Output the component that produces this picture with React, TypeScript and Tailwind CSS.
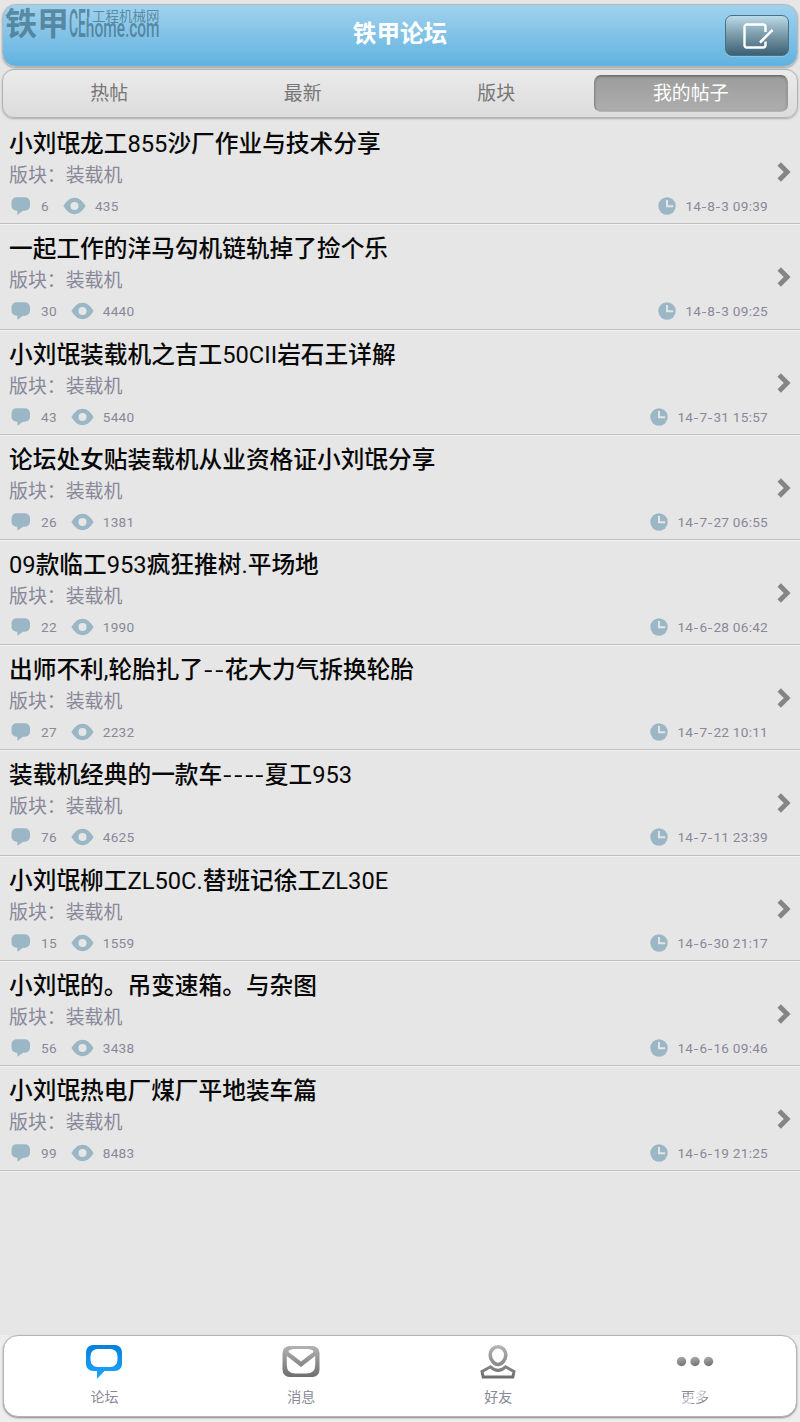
import React from "react";

const font = "font-[Roboto,'Noto_Sans_CJK_SC',sans-serif]";

const posts: [string, number, number, string][] = [
  ["小刘氓龙工855沙厂作业与技术分享", 6, 435, "14-8-3 09:39"],
  ["一起工作的洋马勾机链轨掉了捡个乐", 30, 4440, "14-8-3 09:25"],
  ["小刘氓装载机之吉工50CII岩石王详解", 43, 5440, "14-7-31 15:57"],
  ["论坛处女贴装载机从业资格证小刘氓分享", 26, 1381, "14-7-27 06:55"],
  ["09款临工953疯狂推树.平场地", 22, 1990, "14-6-28 06:42"],
  ["出师不利,轮胎扎了--花大力气拆换轮胎", 27, 2232, "14-7-22 10:11"],
  ["装载机经典的一款车----夏工953", 76, 4625, "14-7-11 23:39"],
  ["小刘氓柳工ZL50C.替班记徐工ZL30E", 15, 1559, "14-6-30 21:17"],
  ["小刘氓的。吊变速箱。与杂图", 56, 3438, "14-6-16 09:46"],
  ["小刘氓热电厂煤厂平地装车篇", 99, 8483, "14-6-19 21:25"],
];

/** Sets Latin runs in the regular weight and gives every hyphen a wide cell. */
function Mixed({ text }: { text: string }) {
  return (
    <>
      {text.split(/(-|[\w.,: ]+)/).map((part, i) => {
        if (part === "-") {
          return (
            <span key={i} className="inline-block w-[0.45em] scale-x-125 text-center font-normal tracking-normal">
              -
            </span>
          );
        }
        return i % 2 ? (
          <span key={i} className="font-normal">
            {part}
          </span>
        ) : (
          part
        );
      })}
    </>
  );
}

function CommentIcon() {
  return (
    <svg width="20" height="18" viewBox="0 0 20 18" fill="#9bb7c6">
      <path d="M5.500 .2h8.500a5 5 0 0 1 5 5v3.600a5 5 0 0 1-5 5H12L6.500 17.700 6.300 13.800H5.500A5 5 0 0 1 .5 8.800V5.200A5 5 0 0 1 5.500 .2Z" />
    </svg>
  );
}

function EyeIcon() {
  return (
    <svg width="23" height="18" viewBox="0 0 23 18" fill="#9bb7c6">
      <path
        fillRule="evenodd"
        d="M.4 9C3.500 4 7 .8 11.500 .8S19.500 4 22.600 9C19.500 14 16 17.200 11.500 17.200S3.500 14 .4 9Zm11.100-4a4 4 0 1 0 0 8 4 4 0 0 0 0-8Z"
      />
    </svg>
  );
}

function ClockIcon() {
  return (
    <svg width="18" height="18" viewBox="0 0 18 18">
      <circle cx="9" cy="9" r="8.700" fill="#9bb7c6" />
      <path d="M9 3v6.300h6.200" fill="none" stroke="#e6e6e6" strokeWidth="1.900" />
    </svg>
  );
}

function Row({ post }: { post: [string, number, number, string] }) {
  const [title, replies, views, date] = post;
  return (
    <li className="flex h-[105.180px] items-stretch border-b border-[#bfbfbf] pr-[9px] pl-[9px] shadow-[0_1px_0_#f2f2f2]">
      <div className="flex min-w-0 grow flex-col pt-[8px]">
        <h2 className="h-[33px] text-[23.700px] leading-[34px] font-medium whitespace-nowrap text-[#080808]">
          <Mixed text={title} />
        </h2>
        <p className="h-8 text-[18.900px] leading-8 whitespace-nowrap text-[#888899]">版块：装载机</p>
        <div className="-mt-[1px] flex h-[30px] items-center pl-[2px] text-[13.600px] leading-[30px] tracking-[0.260px] text-[#888899]">
          <CommentIcon />
          <span className="ml-[10px]">{replies}</span>
          <span className="ml-[14px]">
            <EyeIcon />
          </span>
          <span className="ml-[9px]">{views}</span>
          <span className="mr-[9px] ml-auto">
            <ClockIcon />
          </span>
          <span className="whitespace-pre">
            <Mixed text={date} />
          </span>
        </div>
      </div>
      <div className="flex w-[23px] shrink-0 justify-end pt-[43px]">
        <svg width="14" height="20" viewBox="0 0 14 20" fill="none" stroke="#858585" strokeWidth="4.800">
          <path d="m2.200 2 8 8-8 8" />
        </svg>
      </div>
    </li>
  );
}

function Watermark() {
  return (
    <svg className="absolute top-0 left-0 overflow-visible" width="170" height="50" fill="#426f86" fillOpacity=".72">
      <text x="5" y="34.500" fontSize="32" fontWeight="700" fontFamily="Noto Sans CJK SC, sans-serif" textLength="64" lengthAdjust="spacingAndGlyphs">
        铁甲
      </text>
      <g fontFamily="Roboto, sans-serif" fontWeight="500">
        <text transform="translate(69 36.500) scale(.56 1.350)" fontSize="29" textLength="30" lengthAdjust="spacingAndGlyphs">
          CE
        </text>
        <text transform="translate(85.800 36.500) scale(.6 1)" fontSize="26" textLength="123" lengthAdjust="spacingAndGlyphs">
          home.com
        </text>
      </g>
      <rect x="87" y="9" width="2.400" height="8.500" />
      <text x="92" y="20.500" fontSize="13.500" fontFamily="Noto Sans CJK SC, sans-serif">
        工程机械网
      </text>
    </svg>
  );
}

function Header() {
  return (
    <header className="relative mx-[2px] mt-[4px] flex h-[63px] items-center justify-end rounded-[14px] border border-[#b4b8ba] bg-linear-to-b from-[#a0d2ed] to-[#60b2e0] pr-[8px] shadow-[0_1px_2px_#999]">
      <h1 className="absolute inset-x-0 top-[12px] text-center text-[23.600px] leading-[34px] font-bold text-white">铁甲论坛</h1>
      <button className="flex h-[41px] w-[64px] items-center justify-center rounded-[7px] border border-[#477184] bg-linear-to-b from-[#bddbe9] via-[#7999a8] to-[#3c6074] shadow-[0_1px_0_#8ac5e4]">
        <svg width="32" height="28" viewBox="0 0 32 28" fill="none" stroke="white" strokeWidth="2.400">
          <path d="M24.500 10V5a2.500 2.500 0 0 0-2.500-2.500H6A2.500 2.500 0 0 0 3.500 5v18A2.500 2.500 0 0 0 6 25.500h16a2.500 2.500 0 0 0 2.500-2.500v-3.500" />
          <path d="m31.500 8-11 11-1.500 1.500" strokeWidth="2.500" />
        </svg>
      </button>
    </header>
  );
}

function Tabs() {
  return (
    <nav className="mx-[2px] mt-[2px] flex h-[49px] rounded-[12px] border border-[#b2b2b2] bg-linear-to-b from-[#ebebeb] to-[#dcdcdc] pt-[5px] pr-[9px] pl-[9px] text-[18.900px] shadow-[0_1px_2px_#aaa]">
      {["热帖", "最新", "版块", "我的帖子"].map((t, i) => (
        <button
          key={t}
          className={
            i === 3
              ? "ml-px h-[37px] flex-1 rounded-[7px] border border-t-[#6f6f6f] border-r-[#999] border-b-[#b5b5b5] border-l-[#888] bg-linear-to-b from-[#9d9d9d] to-[#adadad] leading-[36px] text-white shadow-[inset_0_1px_2px_#777]"
              : "h-[37px] flex-1 pl-[1px] leading-[38px] text-[#777]"
          }
        >
          {t}
        </button>
      ))}
    </nav>
  );
}

function ForumIcon() {
  return (
    <svg width="40" height="36" viewBox="0 0 40 36">
      <defs>
        <linearGradient id="forum" x2="0" y2="1">
          <stop stopColor="#0581d9" />
          <stop offset="1" stopColor="#20a7ff" />
        </linearGradient>
      </defs>
      <path
        fill="url(#forum)"
        fillRule="evenodd"
        d="M9 1h22a7 7 0 0 1 7 7v12a7 7 0 0 1-7 7H20.500L13 35V27H9a7 7 0 0 1-7-7V8A7 7 0 0 1 9 1Zm4.500 4A7 7 0 0 0 6.500 12v4a7 7 0 0 0 7 7h13a7 7 0 0 0 7-7v-4a7 7 0 0 0-7-7Z"
      />
    </svg>
  );
}

function GreyGradient({ id }: { id: string }) {
  return (
    <defs>
      <linearGradient id={id} gradientUnits="userSpaceOnUse" x1="0" y1="1" x2="0" y2="34">
        <stop stopColor="#b5b5b5" />
        <stop offset="1" stopColor="#6c6c6c" />
      </linearGradient>
    </defs>
  );
}

function MailIcon() {
  return (
    <svg width="40" height="36" viewBox="0 0 40 36">
      <GreyGradient id="mail" />
      <rect x="1.500" y="2" width="37" height="31" rx="7" fill="url(#mail)" />
      <path fill="#fff" d="M8 6.500Q10 5 13 5h14q3 0 5 1.500.8.800 0 1.800L20 17.500 8 8.300Q7 7.300 8 6.500Z" />
      <path fill="#fff" d="M5.800 12 20 23 34.200 12V21q0 8.500-8.500 8.500H14.300q-8.500 0-8.500-8.500Z" />
    </svg>
  );
}

function FriendsIcon() {
  return (
    <svg width="40" height="36" viewBox="0 0 40 36" fill="none" stroke="url(#friend)">
      <GreyGradient id="friend" />
      <path strokeWidth="3.600" d="M20 2.800c4.600 0 7.800 3.700 7.800 8.200S24 20.500 20 20.500s-7.800-5-7.800-9.500S15.400 2.800 20 2.800Z" />
      <path strokeWidth="3" d="M12.500 22.800 4 27.500 5.200 33h29.600L36 27.500l-8.500-4.700Q20 30 12.500 22.800Z" />
    </svg>
  );
}

function MoreIcon() {
  return (
    <svg width="40" height="36" viewBox="0 0 40 36">
      <defs>
        <linearGradient id="more" x1=".35" y1="0" x2=".65" y2="1">
          <stop stopColor="#ababab" />
          <stop offset="1" stopColor="#707070" />
        </linearGradient>
      </defs>
      {[6.500, 20, 33.500].map((x) => (
        <circle key={x} cx={x} cy="17.500" r="4.700" fill="url(#more)" />
      ))}
    </svg>
  );
}

function BottomBar() {
  const items = [
    { label: "论坛", icon: <ForumIcon /> },
    { label: "消息", icon: <MailIcon /> },
    { label: "好友", icon: <FriendsIcon /> },
    { label: "更多", icon: <MoreIcon /> },
  ];
  return (
    <div className="mt-auto bg-[#ededed] px-[3px] pb-[5px]">
      <footer className="flex h-[82px] rounded-[15px] border border-[#b5b5b5] bg-white pr-[2.500px] pl-[2px] shadow-[0_1px_2px_#888]">
        {items.map(({ label, icon }) => (
          <button key={label} className="flex flex-1 flex-col items-center pt-[8px] text-[14px] text-[#888899]">
            {icon}
            <span
              className={
                label === "更多"
                  ? "mt-[7px] leading-5 mask-[linear-gradient(155deg,#000_35%,#0003_42%,#000b_49%,#0004_57%,#000_68%)]"
                  : "mt-[7px] leading-5"
              }
            >
              {label}
            </span>
          </button>
        ))}
      </footer>
    </div>
  );
}

export default function App() {
  return (
    <div className={`${font} relative flex h-[1422px] w-[800px] flex-col overflow-hidden bg-[#e6e6e6]`}>
      <Header />
      <Tabs />
      <ul className="mt-[1.300px]">
        {posts.map((p) => (
          <Row key={p[0]} post={p} />
        ))}
      </ul>
      <BottomBar />
      <Watermark />
    </div>
  );
}
